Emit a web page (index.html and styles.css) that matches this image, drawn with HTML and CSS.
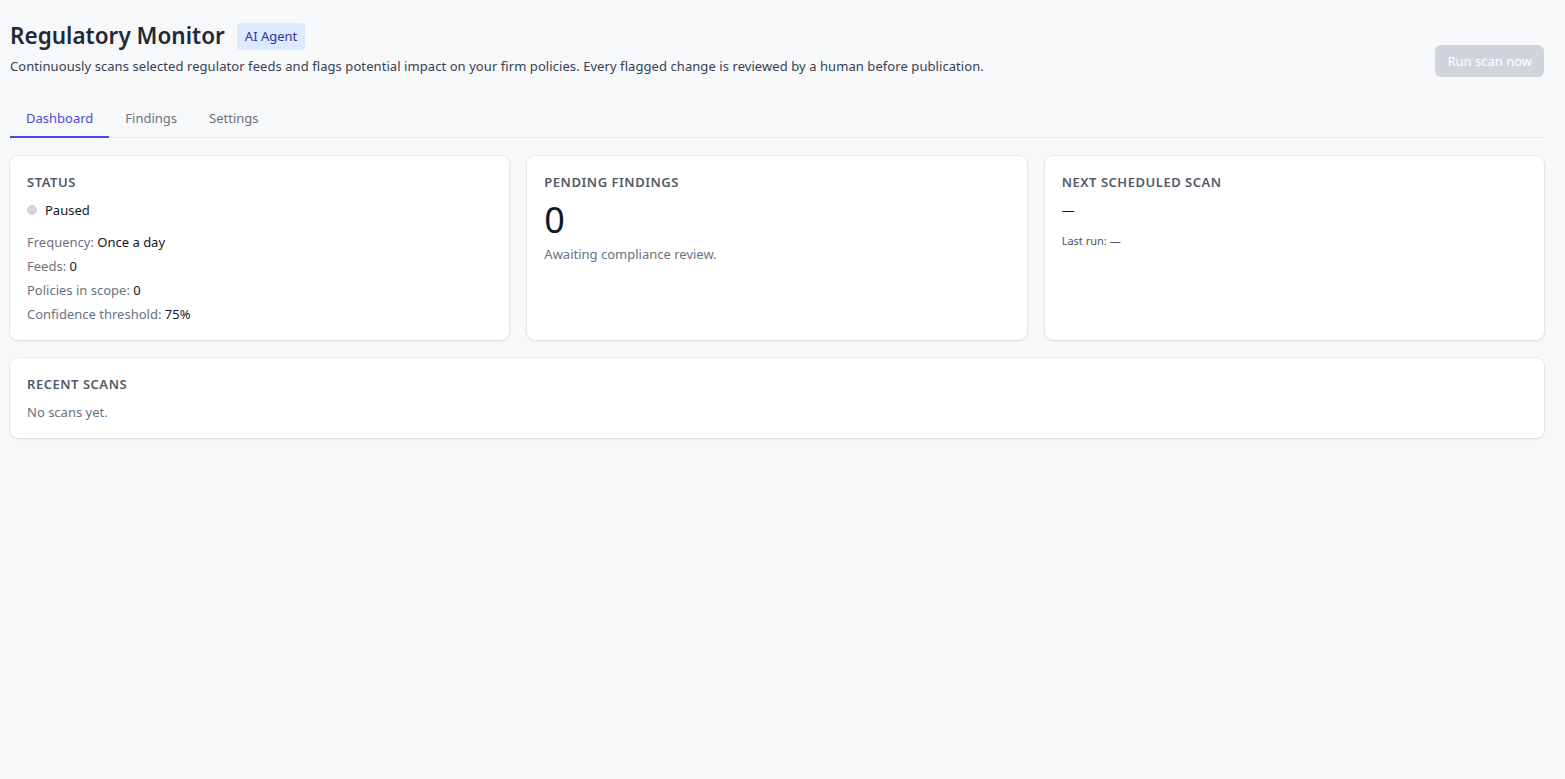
FILE: index.html
```html
<!DOCTYPE html>
<html>
  <head>
    <title>Regulatory Monitor</title>
    <link rel="stylesheet" href="styles.css">
  </head>
  <body>
    <div class="page">
      <header class="header">
        <div>
          <div class="title-row">
            <h1>Regulatory Monitor</h1>
            <span class="badge">AI Agent</span>
          </div>
          <p class="subtitle">Continuously scans selected regulator feeds and flags potential impact on your firm policies. Every flagged change is reviewed by a human before publication.</p>
        </div>
        <button class="run-btn" disabled>Run scan now</button>
      </header>

      <nav class="tabs">
        <a class="tab active" href="#">Dashboard</a>
        <a class="tab" href="#">Findings</a>
        <a class="tab" href="#">Settings</a>
      </nav>

      <div class="cards">
        <div class="card">
          <h2 class="card-title">Status</h2>
          <div class="status"><span class="dot"></span>Paused</div>
          <div class="meta">
            <div><span class="label">Frequency:</span> Once a day</div>
            <div><span class="label">Feeds:</span> 0</div>
            <div><span class="label">Policies in scope:</span> 0</div>
            <div><span class="label">Confidence threshold:</span> 75%</div>
          </div>
        </div>
        <div class="card">
          <h2 class="card-title">Pending findings</h2>
          <div class="big-number">0</div>
          <div class="muted">Awaiting compliance review.</div>
        </div>
        <div class="card">
          <h2 class="card-title">Next scheduled scan</h2>
          <div class="next-scan">—</div>
          <div class="small">Last run: —</div>
        </div>
      </div>

      <div class="card recent">
        <h2 class="card-title">Recent scans</h2>
        <div class="muted">No scans yet.</div>
      </div>
    </div>
  </body>
</html>
```

FILE: styles.css
```css
body {
  margin: 0;
  background-color: #f7f8fa;
  color: #111827;
  font-family: "Noto Sans", "Open Sans", sans-serif;
  font-size: 13px;
}

.page {
  padding: 20px 21px 20px 10px;
}

.header {
  display: flex;
  justify-content: space-between;
  align-items: flex-end;
}

.title-row {
  display: flex;
  align-items: center;
  gap: 12px;
}

h1 {
  margin: 0;
  font-size: 22.5px;
  font-weight: 600;
  color: #1f2937;
  line-height: 32px;
}

.badge {
  background-color: #dbeafe;
  color: #3730a3;
  border-radius: 4px;
  padding: 4px 8px;
  font-size: 13px;
  line-height: 19px;
  margin-top: 1px;
}

.subtitle {
  margin: 5px 0 0;
  color: #374151;
  line-height: 18px;
  letter-spacing: 0.07px;
}

.run-btn {
  background-color: #d1d5db;
  color: #fff;
  border: none;
  border-radius: 6px;
  padding: 0 12px;
  height: 32px;
  font-family: inherit;
  font-size: 13px;
  margin-bottom: -2px;
}

.tabs {
  display: flex;
  margin-top: 24px;
  border-bottom: 1px solid #e5e7eb;
}

.tab {
  padding: 10px 16px 9px;
  line-height: 18px;
  color: #6b7280;
  text-decoration: none;
  border-bottom: 2px solid transparent;
  margin-bottom: -1px;
}

.tab.active {
  color: #4f46e5;
  border-bottom-color: #4f46e5;
}

.cards {
  display: grid;
  grid-template-columns: repeat(3, 1fr);
  gap: 18px;
  margin-top: 18px;
}

.card {
  background-color: #fff;
  border-radius: 8px;
  padding: 16px 16px 14px 17px;
  box-shadow: 0 0 0 1px rgba(0, 0, 0, 0.04), 0 1px 3px rgba(0, 0, 0, 0.1);
}

.card-title {
  margin: 0 0 8px;
  font-size: 13px;
  font-weight: 600;
  text-transform: uppercase;
  letter-spacing: 0.04em;
  color: #525a68;
  line-height: 20px;
}

.status {
  display: flex;
  align-items: center;
  gap: 8px;
  line-height: 20px;
  margin-bottom: 10px;
}

.dot {
  width: 10px;
  height: 10px;
  border-radius: 50%;
  background-color: #d1d5db;
}

.meta div {
  line-height: 24px;
}

.label {
  color: #6b7280;
}

.big-number {
  font-size: 36px;
  line-height: 40px;
  color: #111827;
  margin-bottom: 4px;
}

.muted {
  color: #6b7280;
  line-height: 20px;
}

.next-scan {
  line-height: 20px;
  margin-bottom: 13px;
}

.small {
  font-size: 11px;
  line-height: 16px;
  color: #4b5563;
}

.recent {
  margin-top: 18px;
  padding-bottom: 16px;
}
```
